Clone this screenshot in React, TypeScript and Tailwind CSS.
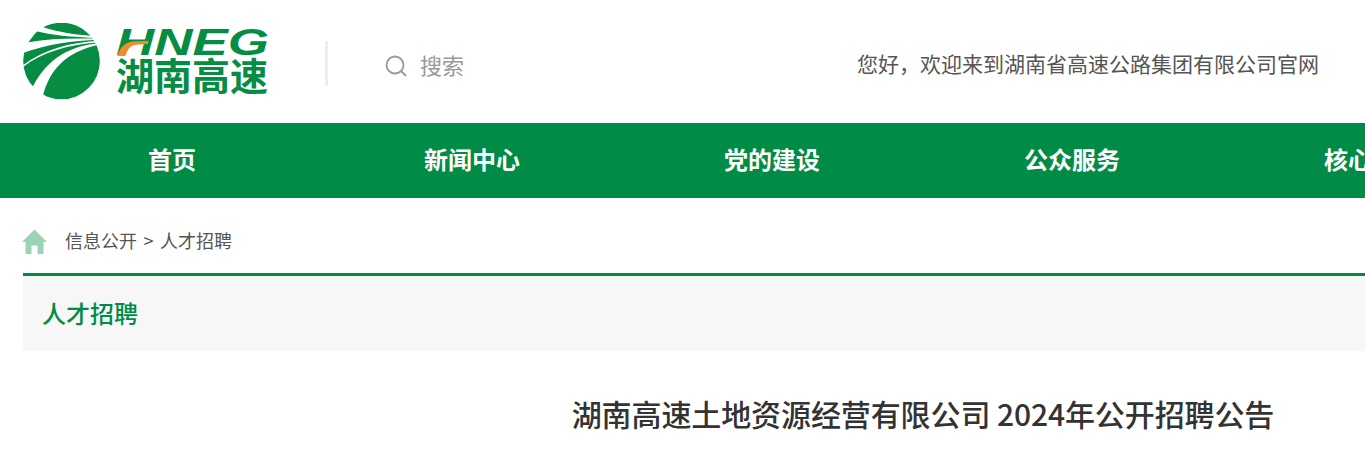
import React from 'react'

const cjk = "font-['Noto_Sans_CJK_SC','Noto_Sans',sans-serif]"

const navItems = ['首页', '新闻中心', '党的建设', '公众服务', '核心业务', '信息公开']

const Logo = () => {
  return (
    <div className='flex items-center w-[247px] h-[77px]'>
      <svg width="77" height="77" viewBox="24 27 231 231" className='shrink-0'>
        <defs>
          <clipPath id="disc"><circle cx="139.5" cy="141" r="115" /></clipPath>
        </defs>
        <g clipPath="url(#disc)" fill="#078c44">
          <path d="M70 10 L270 10 L270 67 L232 66 C180 62 130 55 85 40 Z" />
          <path d="M65 52 C110 64 170 70 270 73 L270 75 C190 72 110 72 40 85 Z" />
          <path d="M10 122 C90 92 170 78 270 77 L270 80 C170 83 80 105 10 165 Z" />
          <path d="M10 170 C70 118 160 88 270 84 L270 86 C170 92 100 130 55 215 L10 215 Z" />
          <path d="M85 240 C105 170 150 110 270 88 L270 270 L85 270 Z" />
        </g>
      </svg>
      <div className='ml-[16px] mt-[-1px] flex flex-col items-start'>
        <div className='relative h-[25px] w-[152px]'>
          <span className="block font-['Liberation_Sans',sans-serif] italic font-bold text-[#078c44] text-[36px] leading-[25px] origin-left scale-x-[1.47] whitespace-nowrap">HNEG</span>
          <svg width="35" height="16" viewBox="0 0 40 20" className='absolute left-[0px] top-[10px]'>
            <path d="M0 20 C3 9 10 3 19 2 L39 1 L38 5 L23 6 C15 7 12 13 10 20 Z" fill="#f08c2e" />
          </svg>
        </div>
        <span className={`${cjk} font-bold text-[#078c44] text-[38px] leading-[38px] whitespace-nowrap`}>湖南高速</span>
      </div>
    </div>
  )
}

const App = () => {
  return (
    <div className={`w-[1365px] h-[474px] overflow-hidden bg-white ${cjk}`}>
      <div className='w-[1845px]'>
        <div className='h-[123px] flex items-center pl-[23px]'>
          <Logo />
          <div className='w-[3px] h-[45px] bg-[#eeeeee] ml-[55px] mt-[4px]'></div>
          <svg width="22" height="22" viewBox="0 0 22 22" fill="none" stroke="#999999" strokeWidth="1.8" className='ml-[57px] mt-[9px]'>
            <circle cx="10" cy="10" r="8.5" />
            <path d="M16 16 L20.5 20.5" strokeLinecap="round" />
          </svg>
          <span className='ml-[13px] mt-[5px] text-[22px] text-[#999999]'>搜索</span>
          <span className='ml-[393px] mt-[5px] text-[21px] text-[#555555] whitespace-nowrap'>您好，欢迎来到湖南省高速公路集团有限公司官网</span>
        </div>
        <div className='h-[75px] bg-[#008c46] flex pl-[22px]'>
          {navItems.map((item) => (
            <div key={item} className='w-[300px] shrink-0 flex items-center justify-center pb-[3px] text-white text-[24px] leading-[36px] font-bold'>{item}</div>
          ))}
        </div>
        <div className='pl-[23px]'>
          <div className='h-[75px] flex items-center'>
            <svg width="25" height="25" viewBox="0 0 25 25" className='mt-[12px] ml-[-1px]'>
              <path d="M12.5 0.5 L25 13 L21.5 13 L21.5 25 L15.5 25 L15.5 16.5 L9.5 16.5 L9.5 25 L3.5 25 L3.5 13 L0 13 Z" fill="#9cd3b6" />
            </svg>
            <div className='ml-[18px] mt-[10px] flex items-center text-[18px] text-[#555555] whitespace-nowrap'>
              <span>信息公开</span>
              <span className='mx-[6.5px]'>&gt;</span>
              <span>人才招聘</span>
            </div>
          </div>
          <div className='h-[78px] border-t-[3px] border-[#008c46] bg-[#f7f7f7] flex items-center pl-[19px]'>
            <h3 className='text-[24px] font-medium text-[#008c46] mt-[-2px]'>人才招聘</h3>
          </div>
          <h1 className='mt-[40px] text-center text-[30px] leading-[44px] font-medium text-[#333333] tracking-[-0.1px] w-[1800px]'>湖南高速土地资源经营有限公司 2024年公开招聘公告</h1>
        </div>
      </div>
    </div>
  )
}

export default App
